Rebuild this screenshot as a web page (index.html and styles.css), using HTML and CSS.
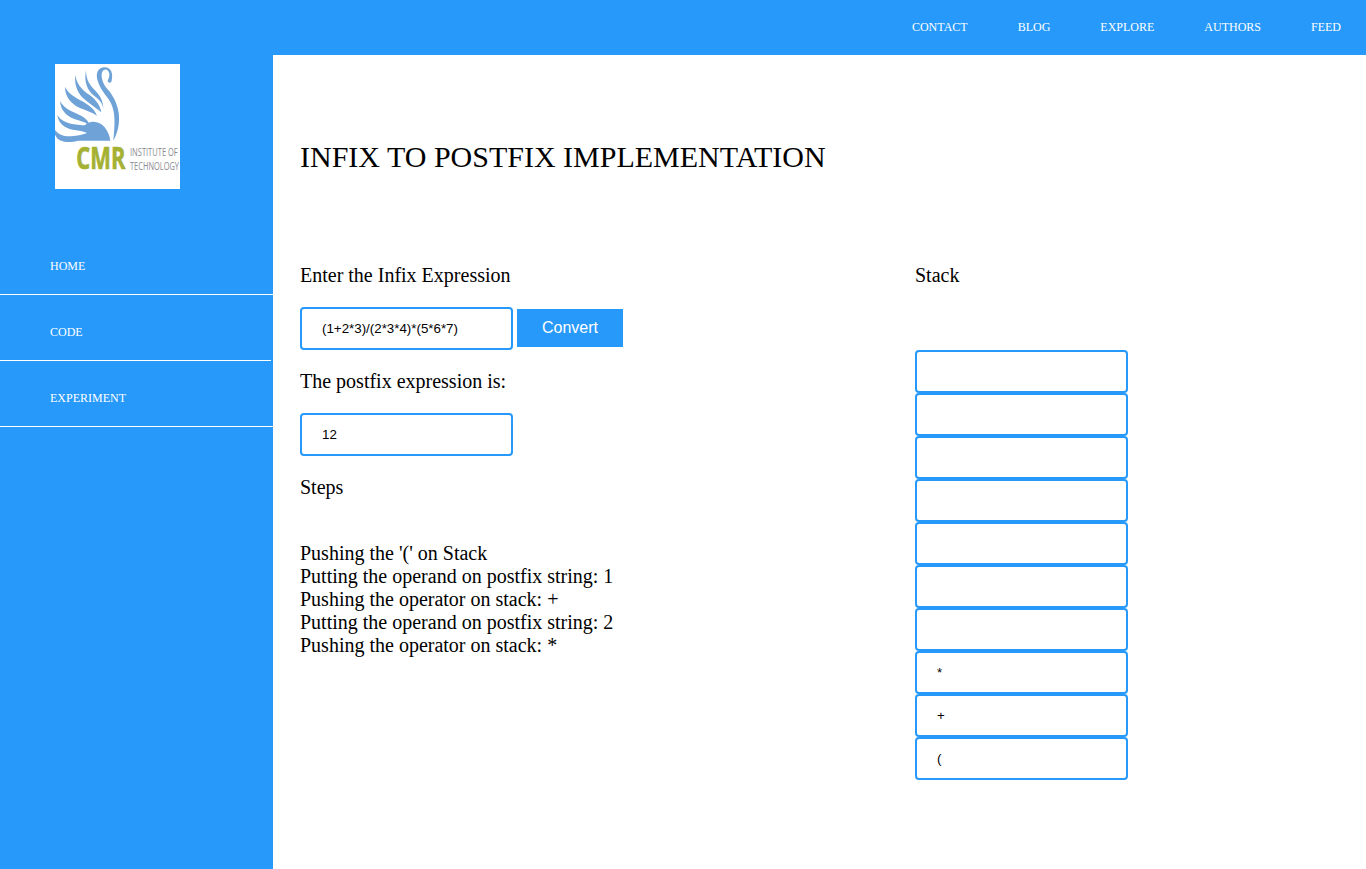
FILE: index.html
```html
<!DOCTYPE html>
<html lang="en">
<head>
<meta charset="utf-8">
<title>Infix to Postfix</title>
<link rel="stylesheet" href="styles.css">
</head>
<body>
<nav class="topbar">
  <a class="top-link">CONTACT</a>
  <a class="top-link">BLOG</a>
  <a class="top-link">EXPLORE</a>
  <a class="top-link">AUTHORS</a>
  <a class="top-link">FEED</a>
</nav>
<div class="page">
  <aside class="sidebar">
    <svg class="logo" viewBox="15 12 375 375" role="img" aria-label="CMR Institute of Technology">
      <rect x="15" y="12" width="375" height="375" fill="#fff"/>
      <g fill="#6fa3d8">
        <path d="M184 66C191 42 184 22 164 22C143 22 135 42 144 65C151 87 164 100 176 118C193 144 198 171 190 242C204 217 210 188 206 159C202 130 188 105 173 88C158 71 151 48 157 35C164 24 176 28 178 42C179 53 173 59 173 64C175 69 180 69 184 66Z"/>
        <path d="M108 31C101 65 112 92 133 108C150 121 158 130 160 147C160 122 149 105 132 88C116 72 108 54 108 31Z"/>
        <path d="M76 44C72 77 84 102 106 120C126 136 142 147 154 157C151 138 140 121 119 105C93 88 79 69 76 44Z"/>
        <path d="M45 80C45 108 60 129 88 143C110 152 128 157 141 167C134 148 120 138 101 126C73 110 54 100 45 80Z"/>
        <path d="M30 123C32 150 48 168 75 178C92 184 106 187 118 194C114 178 98 169 78 160C54 150 39 140 30 123Z"/>
        <path d="M22 165C25 190 43 204 68 209C88 212 100 213 114 220L122 196C104 196 88 196 71 193C48 188 31 181 22 165Z"/>
        <path d="M15 210C27 226 47 231 70 228C88 225 102 223 114 218L98 205L110 190C130 180 152 186 164 202C173 214 179 226 181 242L86 242C55 249 25 248 15 224Z"/>
      </g>
      <text class="logo-name" transform="translate(79 328) scale(.7 1)" textLength="210" lengthAdjust="spacingAndGlyphs">CMR</text>
      <text class="logo-sub" transform="translate(240 287) scale(.66 1)" textLength="217" lengthAdjust="spacingAndGlyphs">INSTITUTE OF</text>
      <text class="logo-sub" transform="translate(240 329) scale(.69 1)" textLength="213" lengthAdjust="spacingAndGlyphs">TECHNOLOGY</text>
    </svg>
    <ul class="menu">
      <li class="menu-item">HOME</li>
      <li class="menu-item menu-item-short">CODE</li>
      <li class="menu-item">EXPERIMENT</li>
    </ul>
  </aside>
  <main class="content">
    <h1 class="title">INFIX TO POSTFIX IMPLEMENTATION</h1>
    <div class="columns">
      <section class="converter">
        <p class="label">Enter the Infix Expression</p>
        <div class="row">
          <input class="field" type="text" value="(1+2*3)/(2*3*4)*(5*6*7)">
          <button class="convert">Convert</button>
        </div>
        <p class="label">The postfix expression is:</p>
        <div class="row"><input class="field" type="text" value="12"></div>
        <p class="label">Steps</p>
        <div class="steps">
          <div>Pushing the '(' on Stack</div>
          <div>Putting the operand on postfix string: 1</div>
          <div>Pushing the operator on stack: +</div>
          <div>Putting the operand on postfix string: 2</div>
          <div>Pushing the operator on stack: *</div>
        </div>
      </section>
      <section class="stack">
        <p class="label">Stack</p>
        <div class="cells">
          <input class="field" type="text">
          <input class="field" type="text">
          <input class="field" type="text">
          <input class="field" type="text">
          <input class="field" type="text">
          <input class="field" type="text">
          <input class="field" type="text">
          <input class="field" type="text" value="*">
          <input class="field" type="text" value="+">
          <input class="field" type="text" value="(">
        </div>
      </section>
    </div>
  </main>
</div>
</body>
</html>
```
FILE: styles.css
```css
* { box-sizing: border-box; }
body {
  margin: 0;
  height: 869px;
  display: flex;
  flex-direction: column;
  overflow: hidden;
  background: #fff;
  color: #000;
  font-family: "Liberation Serif", "Times New Roman", serif;
  font-size: 20px;
  line-height: 23px;
}
.topbar {
  display: flex;
  justify-content: flex-end;
  height: 55px;
  background: #2699fb;
}
.top-link {
  padding: 20px 25px;
  color: #fff;
  font-size: 12px;
  line-height: 14px;
}
.page { display: flex; flex: 1; }
.sidebar { width: 273px; background: #2699fb; }
.logo { display: block; width: 125px; height: 125px; margin: 9px 0 0 55px; }
.logo-name {
  font: 700 92px "Open Sans", sans-serif;
  fill: #a5b132;
  stroke: #a5b132;
  stroke-width: 2px;
}
.logo-sub {
  font: 400 34px "Open Sans", sans-serif;
  fill: #8b8b90;
}
.menu { margin: 40px 0 0; padding: 0; list-style: none; }
.menu-item {
  height: 66px;
  padding: 30px 0 0 50px;
  border-bottom: 1px solid #fff;
  color: #fff;
  font-size: 12px;
  line-height: 14px;
}
.menu-item-short { width: 271px; }
.content { flex: 1; padding: 85px 0 0 27px; }
.title { margin: 0; font-size: 30px; font-weight: 400; line-height: 34px; }
.columns { display: flex; margin-top: 90px; }
.converter { width: 615px; }
.label { margin: 0; }
.row { display: flex; gap: 4px; margin: 20px 0; }
.field {
  display: block;
  width: 213px;
  height: 43px;
  padding: 0 20px;
  border: 2px solid #2699fb;
  border-radius: 4px;
  background: #fff;
  color: #000;
  font: 13.333px "Liberation Sans", Arial, sans-serif;
}
.convert {
  width: 106px;
  height: 38px;
  margin-top: 2px;
  padding: 0;
  border: 0;
  background: #2699fb;
  color: #fff;
  font: 16px "Liberation Sans", Arial, sans-serif;
}
.steps { margin-top: 43px; }
.cells { margin-top: 63px; }
```
